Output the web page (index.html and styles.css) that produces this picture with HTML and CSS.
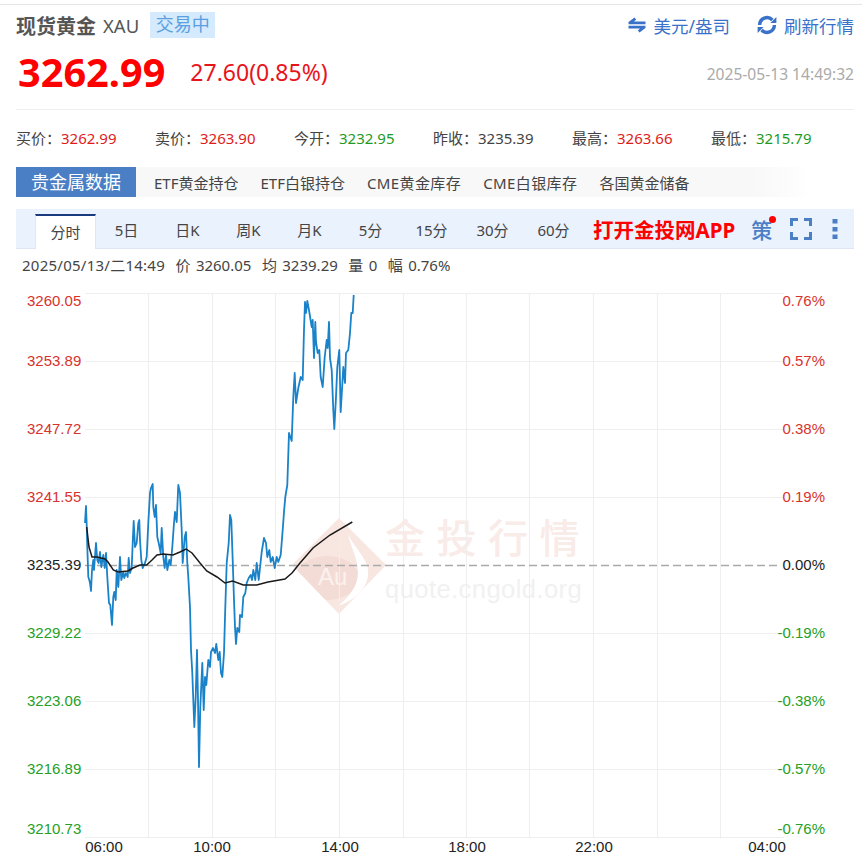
FILE: index.html
```html
<!DOCTYPE html>
<html lang="zh-CN">
<head>
	<meta charset="UTF-8">
	<title>现货黄金</title>
	<link rel="stylesheet" href="styles.css">
</head>
<body>
<div class="quote">
	<div class="quote-head">
		<div class="title-row">
			<h1 class="name">现货黄金</h1>
			<span class="code">XAU</span>
			<span class="status">交易中</span>
			<div class="actions">
				<a class="action">
					<svg class="icon-swap" width="18" height="16" viewBox="0 0 18 16"><path d="M6.5 0.5 L0.5 5 V7.2 H17.5 V4.6 H6 L8.2 2.4 Z" fill="#3a72c9"/><path d="M11.5 15.5 L17.5 11 V8.8 H0.5 V11.4 H12 L9.8 13.6 Z" fill="#3a72c9"/></svg>
					美元/盎司
				</a>
				<a class="action">
					<svg class="icon-refresh" width="20" height="20" viewBox="0 0 20 20"><path d="M2.6 10 A7.4 7.4 0 0 1 15.4 5" fill="none" stroke="#3a72c9" stroke-width="3.4"/><path d="M17.4 10 A7.4 7.4 0 0 1 4.6 15" fill="none" stroke="#3a72c9" stroke-width="3.4"/><path d="M13.4 8 H19.4 V2 Z" fill="#3a72c9"/><path d="M6.6 12 H0.6 V18 Z" fill="#3a72c9"/></svg>
					刷新行情
				</a>
			</div>
		</div>
		<div class="price-row">
			<span class="price">3262.99</span>
			<span class="change">27.60(0.85%)</span>
			<span class="time">2025-05-13 14:49:32</span>
		</div>
	</div>

	<ul class="stats">
		<li>买价：<span class="up">3262.99</span></li>
		<li>卖价：<span class="up">3263.90</span></li>
		<li>今开：<span class="down">3232.95</span></li>
		<li>昨收：<span>3235.39</span></li>
		<li>最高：<span class="up">3263.66</span></li>
		<li>最低：<span class="down">3215.79</span></li>
	</ul>

	<div class="data-tabs">
		<span class="data-title">贵金属数据</span>
		<a>ETF黄金持仓</a>
		<a>ETF白银持仓</a>
		<a class="cme">CME黄金库存</a>
		<a class="cme">CME白银库存</a>
		<a>各国黄金储备</a>
	</div>

	<div class="toolbar">
		<ul class="periods">
			<li class="active">分时</li>
			<li>5日</li>
			<li>日K</li>
			<li>周K</li>
			<li>月K</li>
			<li>5分</li>
			<li>15分</li>
			<li>30分</li>
			<li>60分</li>
		</ul>
		<a class="open-app">打开金投网APP</a>
		<span class="draw-tool">策<i class="dot"></i></span>
		<svg class="icon-full" width="22" height="22" viewBox="0 0 22 22"><path d="M1.5 8 V1.5 H8 M14 1.5 H20.5 V8 M20.5 14 V20.5 H14 M8 20.5 H1.5 V14" fill="none" stroke="#4a7fc6" stroke-width="3"/></svg>
		<svg class="icon-more" width="6" height="20" viewBox="0 0 6 20"><rect x="0.5" y="0" width="5" height="4.5" fill="#4a7fc6"/><rect x="0.5" y="8" width="5" height="4.5" fill="#4a7fc6"/><rect x="0.5" y="15.5" width="5" height="4.5" fill="#4a7fc6"/></svg>
	</div>
	<div class="cursor-info">
		<span class="cursor-date">2025/05/13/二14:49</span>
		<span>价 3260.05</span>
		<span>均 3239.29</span>
		<span>量 0</span>
		<span>幅 0.76%</span>
	</div>
</div>

<svg class="chart" width="862" height="569" viewBox="0 285 862 569">
	<defs>
		<clipPath id="diamond"><path d="M339 518 L386 565 L339 614 L292 565 Z"/></clipPath>
	</defs>
	<g class="mark">
		<path d="M339 518 L386 565 L339 614 L292 565 Z" fill="#f8e6e0"/>
		<ellipse cx="327" cy="578" rx="32" ry="22" fill="#f4dcd6" clip-path="url(#diamond)"/>
		<path d="M348 534 C354 548 366 556 368 570 C370 586 356 600 338 606 C350 596 358 586 358 572 C358 558 350 546 348 534 Z" fill="#fff"/>
		<text class="mark-au" x="318" y="585">Au</text>
		<text class="mark-cn" x="385" y="553">金投行情</text>
		<text class="mark-url" x="385" y="598">quote.cngold.org</text>
	</g>
	<path class="grid" d="M85 293.5H784M85 361.5H784M85 429.5H784M85 497.5H784M85 633.5H784M85 701.5H784M85 769.5H784M85 837.5H784M148.5 293V837M212.5 293V837M275.5 293V837M339.5 293V837M403.5 293V837M466.5 293V837M529.5 293V837M593.5 293V837M657.5 293V837M720.5 293V837"/>
	<path class="base" d="M85 565.5H780"/>
	<polyline class="price-line" points="85,523 86,506 86.7,525 87.3,547 88.3,577 89.3,580 90,583 91,591 92,570 93.3,560 94,570 96,543 97.3,560 98.7,563 100,552 101.3,567 103.3,555 104.7,568 106,553 107.3,577 109,603 110.3,605 112,625 113.3,597 114.3,592 115.7,600 116.7,570 118.3,587 120,557 121.3,580 123.3,572 124.3,578 126,573 127.7,577 128.7,558 130,573 131.7,568 132.7,543 133.7,521 135,547 136.7,543 138.3,523 139.3,520 140,540 141.3,560 142.7,568 145,563 146.7,557 148.3,523 150,493 151,488 152.7,484 153.3,507 154.7,517 156,505 157.3,537 158.7,543 160.7,553 161.7,528 163.3,557 164.7,568 166,555 167.3,570 169.3,560 170.7,565 172.3,547 174,523 175,512 176.7,522 178.3,485 180,493 181.7,530 182.7,563 184.7,537 186,532 187.3,563 188.3,577 189.3,595 190,607 191,650 192.3,673 194.3,727 195.7,697 197,650 198,700 199,767 200.3,707 202.3,663 203.7,710 205,677 206.3,685 208.3,660 210,667 211,652 213,648 215,653 216.3,644 218.3,660 219.7,652 221,673 222.3,677 224,653 225,617 226.7,563 228.7,543 230,515 231.3,520 232.7,560 234,600 235,627 236,644 237.3,628 239.3,632 240,615 242,617 243.3,597 245.3,593 246.7,583 248.7,578 250.7,575 252,580 253.3,570 255.3,580 256.7,563 258.7,580 261.7,552 264,538 266,543 267.3,557 269.3,550 270.7,562 272.7,557 274.7,568 276.7,557 278.3,562 280.7,555 282.7,530 284,512 285.3,497 287.3,485 289,433 291.7,441 293.3,397 294.7,373 296,403 298.3,388 300.7,377 302.7,380 304,330 305,302 306,313 307.3,301 309.3,312 311.7,327 312.7,320 314,358 315.3,322 316,342 317.7,353 319.3,350 320.7,377 322.7,387 324.7,357 326.7,340 327.7,348 329,322 330,358 331.7,370 333.3,410 334.3,429 336,397 337.3,367 339.3,350 340.7,412 343.3,367 345,383 346,353 348.3,350 350,333 351.3,313 352.7,313 353.7,295"/>
	<polyline class="avg-line" points="86.7,527 89,547 92,557 97,557 105,559 108,562 113.3,570 118,572 128,571 133,568 140,565 146.7,565 152,560 157,555 163,554 173,555 180,552 186,549 192,553 200,563 206.7,571 217,577 225,583 232.7,581 243.3,585 256.7,585 268,582 285,579 292,573 300,563 313,548 330,535 352.3,522"/>
	<g class="labels">
		<text class="up" x="27" y="306">3260.05</text>
		<text class="up" x="27" y="366">3253.89</text>
		<text class="up" x="27" y="434">3247.72</text>
		<text class="up" x="27" y="502">3241.55</text>
		<text class="flat" x="27" y="570">3235.39</text>
		<text class="down" x="27" y="638">3229.22</text>
		<text class="down" x="27" y="706">3223.06</text>
		<text class="down" x="27" y="774">3216.89</text>
		<text class="down" x="27" y="834">3210.73</text>
	</g>
	<g class="labels to-right">
		<text class="up" x="825" y="306">0.76%</text>
		<text class="up" x="825" y="366">0.57%</text>
		<text class="up" x="825" y="434">0.38%</text>
		<text class="up" x="825" y="502">0.19%</text>
		<text class="flat" x="825" y="570">0.00%</text>
		<text class="down" x="825" y="638">-0.19%</text>
		<text class="down" x="825" y="706">-0.38%</text>
		<text class="down" x="825" y="774">-0.57%</text>
		<text class="down" x="825" y="834">-0.76%</text>
	</g>
	<g class="labels to-middle">
		<text x="104" y="852">06:00</text>
		<text x="212" y="852">10:00</text>
		<text x="340" y="852">14:00</text>
		<text x="467" y="852">18:00</text>
		<text x="594" y="852">22:00</text>
		<text x="767" y="852">04:00</text>
	</g>
</svg>
</body>
</html>
```

FILE: styles.css
```css
* {
	margin: 0;
	padding: 0;
	box-sizing: border-box;
}
body {
	background: #fff;
	color: #444;
	font-family: "Noto Sans", "Noto Sans CJK SC", sans-serif;
	overflow: hidden;
}
ul {
	list-style: none;
}
.up {
	color: #e01b1b;
}
.down {
	color: #1f9a1f;
}

.quote {
	padding: 0 8px 0 16px;
	margin-top: 4px;
	border-top: 1px solid #e6e6e6;
}
.quote-head {
	height: 98px;
	border-bottom: 1px solid #eee;
}
.title-row {
	display: flex;
	align-items: center;
	height: 26px;
	margin-top: 7px;
}
.name {
	font-size: 20px;
	font-weight: 700;
	color: #555;
}
.code {
	font-size: 18.5px;
	color: #555;
	margin-left: 7px;
}
.status {
	height: 26px;
	line-height: 25px;
	margin-left: 11px;
	padding: 0 5.5px;
	font-size: 18px;
	color: #5a9fe0;
	background: #d5eafc;
}
.actions {
	display: flex;
	margin-left: auto;
	gap: 27px;
}
.action {
	display: flex;
	align-items: center;
	gap: 7px;
	font-size: 17.5px;
	color: #3a72c9;
}
.price-row {
	display: flex;
	align-items: center;
	padding: 0 0 3px 2px;
	height: 71px;
}
.price {
	font-size: 39.7px;
	font-weight: 700;
	color: #f00;
}
.change {
	margin-left: 25px;
	font-size: 23px;
	color: #e8141c;
}
.time {
	margin: 4px 0 0 auto;
	font-size: 15.6px;
	color: #aaa;
}

.stats {
	display: grid;
	grid-template-columns: repeat(6, 139px);
	height: 57px;
	line-height: 57px;
	font-size: 15px;
	color: #444;
}
.data-tabs {
	display: flex;
	align-items: center;
	height: 30px;
	background: linear-gradient(to right, #f8f8f8 0, #f8f8f8 88%, #fff 95%);
	font-size: 15px;
	color: #444;
}
.data-tabs a {
	margin-left: 22px;
}
.data-tabs .cme {
	letter-spacing: 0.4px;
}
.data-title {
	width: 120px;
	height: 30px;
	margin-right: -4px;
	line-height: 30px;
	text-align: center;
	font-size: 18px;
	color: #fff;
	background: #4a7fc6;
}

.toolbar {
	display: flex;
	align-items: center;
	height: 40px;
	margin-top: 12px;
	padding-left: 19px;
	background: #eaf2fd;
	border-bottom: 1px solid #dde6f2;
}
.periods {
	display: flex;
	align-self: flex-end;
	height: 35px;
	margin-bottom: -1px;
	font-size: 15px;
	color: #444;
}
.periods li {
	width: 61px;
	line-height: 33px;
	text-align: center;
}
.periods .active {
	background: #fff;
	border-top: 2px solid #1a3a80;
	border-left: 1px solid #dde6f2;
	border-right: 1px solid #dde6f2;
}
.open-app {
	margin-left: 9px;
	font-size: 20.5px;
	font-weight: 700;
	color: #f00;
}
.draw-tool {
	position: relative;
	margin-left: 16px;
	font-size: 21px;
	font-weight: 500;
	color: #4a7fc6;
}
.dot {
	position: absolute;
	top: 2px;
	right: -4px;
	width: 7px;
	height: 7px;
	border-radius: 50%;
	background: #f00;
}
.icon-full {
	margin-left: 18px;
}
.icon-more {
	margin-left: 20px;
}
.cursor-info {
	display: flex;
	gap: 10.5px;
	height: 36px;
	line-height: 32px;
	padding-left: 6px;
	font-size: 15px;
	word-spacing: 1.5px;
	color: #444;
	white-space: nowrap;
}
.cursor-date {
	letter-spacing: 0.25px;
}

.chart {
	display: block;
}
.grid {
	fill: none;
	stroke: #eeeeee;
	stroke-width: 1;
}
.base {
	fill: none;
	stroke: #aaa;
	stroke-width: 1.5;
	stroke-dasharray: 8 4;
}
.price-line {
	fill: none;
	stroke: #1a82c8;
	stroke-width: 1.8;
	stroke-linejoin: round;
}
.avg-line {
	fill: none;
	stroke: #1a1a1a;
	stroke-width: 1.5;
}
.labels text {
	font-family: "Liberation Sans", sans-serif;
	font-size: 15px;
	fill: #222;
}
.labels .up {
	fill: #d8322c;
}
.labels .down {
	fill: #25a025;
}
.to-right text {
	text-anchor: end;
}
.to-middle text {
	text-anchor: middle;
}
.mark-au {
	font-family: "Liberation Sans", sans-serif;
	font-size: 24px;
	fill: #fbf1ee;
}
.mark-cn {
	font-family: "Noto Sans CJK SC", sans-serif;
	font-size: 40px;
	font-weight: 500;
	letter-spacing: 11.5px;
	fill: #f9ebe7;
}
.mark-url {
	font-family: "Liberation Sans", sans-serif;
	font-size: 25.6px;
	letter-spacing: 0.4px;
	fill: #f1f1f1;
}
```
